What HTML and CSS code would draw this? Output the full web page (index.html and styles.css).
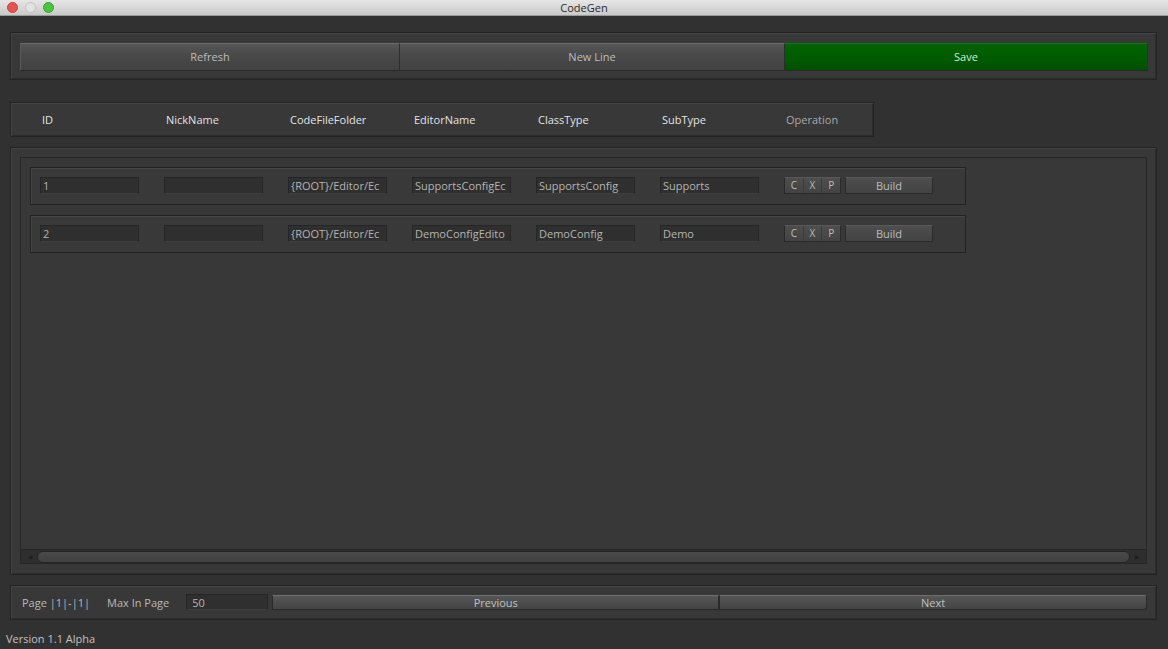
FILE: index.html
```html
<!DOCTYPE html>
<html>
<head>
<meta charset="utf-8">
<link rel="stylesheet" href="styles.css">
</head>
<body>
<div class="window">
  <div class="titlebar">
    <div class="lights">
      <span class="light red"></span>
      <span class="light gray"></span>
      <span class="light green"></span>
    </div>
    <div class="title">CodeGen</div>
  </div>
  <div class="main">
    <div class="panel toolbar">
      <div class="btn">Refresh</div>
      <div class="btn">New Line</div>
      <div class="btn save">Save</div>
    </div>

    <div class="panel header">
      <span>ID</span>
      <span>NickName</span>
      <span>CodeFileFolder</span>
      <span>EditorName</span>
      <span>ClassType</span>
      <span>SubType</span>
      <span class="dim">Operation</span>
    </div>

    <div class="panel content">
      <div class="scroll">
        <div class="rows">
          <div class="row">
            <div class="field">1</div>
            <div class="field"></div>
            <div class="field">{ROOT}/Editor/Ec</div>
            <div class="field">SupportsConfigEc</div>
            <div class="field">SupportsConfig</div>
            <div class="field">Supports</div>
            <div class="ops">
              <div class="cxp"><span>C</span><span>X</span><span>P</span></div>
              <div class="build">Build</div>
            </div>
          </div>
          <div class="row">
            <div class="field">2</div>
            <div class="field"></div>
            <div class="field">{ROOT}/Editor/Ec</div>
            <div class="field">DemoConfigEdito</div>
            <div class="field">DemoConfig</div>
            <div class="field">Demo</div>
            <div class="ops">
              <div class="cxp"><span>C</span><span>X</span><span>P</span></div>
              <div class="build">Build</div>
            </div>
          </div>
        </div>
        <div class="hscroll">
          <span class="arrow left">&#9664;</span>
          <div class="thumb"></div>
          <span class="arrow right">&#9654;</span>
        </div>
      </div>
    </div>

    <div class="panel footer">
      <span class="lbl">Page |1|-|1|</span>
      <span class="lbl">Max In Page</span>
      <div class="field num">50</div>
      <div class="pager">
        <div class="pbtn">Previous</div>
        <div class="pbtn">Next</div>
      </div>
    </div>

    <div class="version">Version 1.1 Alpha</div>
  </div>
</div>
</body>
</html>
```

FILE: styles.css
```css
* { box-sizing: border-box; }
html, body {
  margin: 0;
  padding: 0;
  width: 1168px;
  height: 649px;
  overflow: hidden;
  background: #313131;
  font-family: "Open Sans", "DejaVu Sans", sans-serif;
  font-size: 11px;
  color: #c4c4c4;
}
.window { width: 1168px; height: 649px; display: flex; flex-direction: column; }

.titlebar {
  height: 16px;
  background: linear-gradient(#e6e6e6, #c9c9c9);
  border-bottom: 1px solid #9a9a9a;
  position: relative;
  display: flex;
  align-items: center;
  justify-content: center;
}
.lights {
  position: absolute;
  left: 7px;
  top: 2px;
  display: flex;
  gap: 7px;
}
.light { width: 11px; height: 11px; border-radius: 50%; display: block; }
.light.red { background: #e5544e; border: 1px solid #c9413b; }
.light.gray { background: #e2e2e2; border: 1px solid #c4c4c4; }
.light.green { background: #4bc53d; border: 1px solid #3aa12f; }
.title { color: #2a2a2a; font-size: 11px; line-height: 15px; }

.main {
  flex: 1;
  display: flex;
  flex-direction: column;
  padding: 16px 11px 0 10px;
}

.panel {
  background: #383838;
  border: 1px solid #232323;
  box-shadow: inset 1px 1px 0 #444, inset -1px -1px 0 #2c2c2c;
}

.toolbar {
  height: 48px;
  padding: 10px 9px 0 9px;
  display: flex;
}
.btn {
  height: 28px;
  flex: 0 0 auto;
  display: flex;
  align-items: center;
  justify-content: center;
  padding-bottom: 1px;
  background: linear-gradient(#565656 0%, #4a4a4a 40%, #424242 100%);
  border-top: 1px solid #6c6c6c;
  border-right: 1px solid #2e2e2e;
  border-bottom: 1px solid #2a2a2a;
  color: #bdbdbd;
}
.btn:nth-child(1) { width: 380px; border-left: 1px solid #5a5a5a; }
.btn:nth-child(2) { width: 385px; }
.btn.save {
  width: 363px;
  background: linear-gradient(#036303, #005a00 60%, #004f00);
  border-top: 1px solid #0a7a0a;
  color: #d8e8d8;
}

.header {
  margin-top: 22px;
  width: 864px;
  height: 35px;
  display: grid;
  grid-template-columns: repeat(7, 124px);
  align-items: center;
  padding-left: 31px;
  padding-bottom: 1px;
  color: #e2e2e2;
}
.header .dim { color: #a8a8a8; }

.content {
  margin-top: 10px;
  height: 428px;
  padding: 9px 9px 10px 9px;
}
.scroll {
  height: 100%;
  background: #383838;
  border: 1px solid #262626;
  display: flex;
  flex-direction: column;
}
.rows {
  flex: 1;
  padding: 9px 0 0 9px;
  display: flex;
  flex-direction: column;
  gap: 10px;
}
.row {
  width: 936px;
  height: 38px;
  border: 1px solid #222;
  box-shadow: inset 1px 1px 0 #454545;
  background: #393939;
  display: flex;
  align-items: center;
  padding-left: 9px;
  padding-bottom: 2px;
  gap: 25px;
}
.field {
  width: 99px;
  height: 17px;
  background: #2f2f2f;
  border: 1px solid #262626;
  border-bottom-color: #3e3e3e;
  color: #b4b4b4;
  line-height: 15px;
  padding-left: 2px;
  white-space: nowrap;
  overflow: hidden;
  font-size: 11px;
}
.ops { display: flex; gap: 4px; align-items: center; }
.cxp {
  width: 57px;
  height: 17px;
  display: flex;
  background: linear-gradient(#4e4e4e, #434343);
  border: 1px solid #2a2a2a;
  border-top-color: #5a5a5a;
}
.cxp span {
  flex: 1;
  text-align: center;
  line-height: 15px;
  border-right: 1px solid #3a3a3a;
  color: #bcbcbc;
  font-size: 10px;
}
.cxp span:last-child { border-right: none; }
.build {
  width: 88px;
  height: 17px;
  text-align: center;
  line-height: 15px;
  background: linear-gradient(#4e4e4e, #434343);
  border: 1px solid #2a2a2a;
  border-top-color: #5a5a5a;
  color: #bcbcbc;
}

.hscroll {
  height: 14px;
  display: flex;
  align-items: center;
  background: #2e2e2e;
  border-top: 1px solid #262626;
  padding: 0 2px;
}
.arrow { font-size: 6px; color: #1e1e1e; width: 14px; text-align: center; }
.thumb {
  flex: 1;
  height: 12px;
  border-radius: 6px;
  background: linear-gradient(#4a4a4a, #404040);
  border: 1px solid #262626;
}

.footer {
  margin-top: 10px;
  height: 35px;
  display: flex;
  align-items: center;
  padding: 0 9px 1px 11px;
}
.lbl { color: #b8b8b8; margin-right: 17px; }
.lbl:first-child { margin-right: 17px; }
.field.num { width: 82px; height: 16px; margin-left: 0; margin-right: 4px; padding-left: 5px; }
.pager { flex: 1; display: flex; height: 15px; }
.pbtn {
  flex: 1;
  text-align: center;
  line-height: 13px;
  background: linear-gradient(#565656, #444);
  border: 1px solid #2a2a2a;
  border-top-color: #707070;
  color: #c0c0c0;
}
.pbtn:first-child { flex: 0 0 447px; }
.pbtn:last-child { border-radius: 0 3px 3px 0; }

.version {
  margin-left: -4px;
  margin-top: 11px;
  color: #c2c2c2;
  font-size: 11px;
}
```
